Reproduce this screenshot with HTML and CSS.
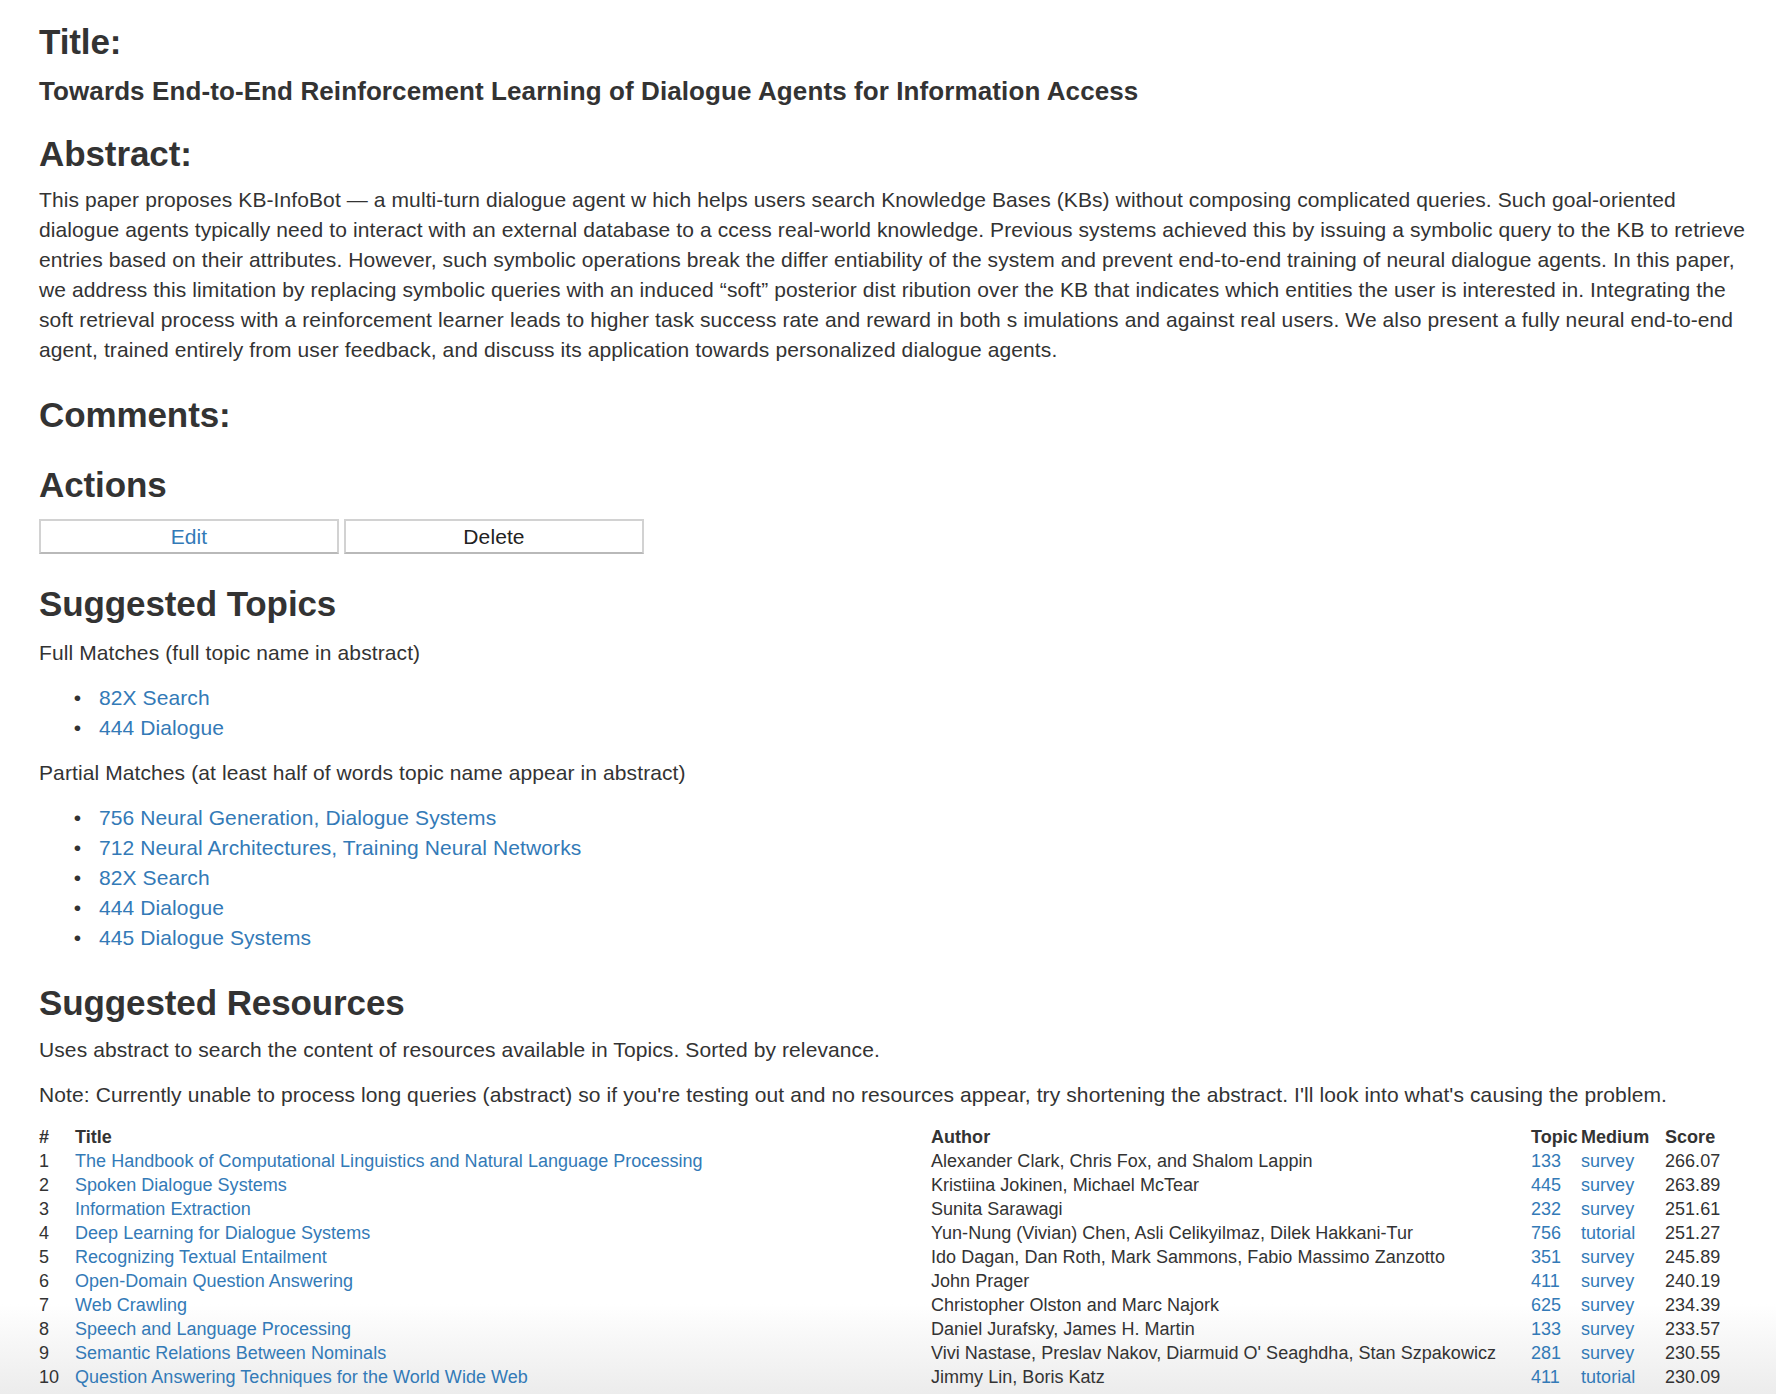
FILE: index.html
```html
<!DOCTYPE html>
<html lang="en">
<head>
<meta charset="utf-8">
<title>Towards End-to-End Reinforcement Learning of Dialogue Agents for Information Access</title>
<link rel="stylesheet" href="styles.css">
</head>
<body>
<main class="page">
  <h3 class="section-title">Title:</h3>
  <h4 class="paper-title">Towards End-to-End Reinforcement Learning of Dialogue Agents for Information Access</h4>

  <h3 class="section-title section-title--abstract">Abstract:</h3>
  <p class="text">This paper proposes KB-InfoBot — a multi-turn dialogue agent w hich helps users search Knowledge Bases (KBs) without composing complicated queries. Such goal-oriented dialogue agents typically need to interact with an external database to a ccess real-world knowledge. Previous systems achieved this by issuing a symbolic query to the KB to retrieve entries based on their attributes. However, such symbolic operations break the differ entiability of the system and prevent end-to-end training of neural dialogue agents. In this paper, we address this limitation by replacing symbolic queries with an induced “soft” posterior dist ribution over the KB that indicates which entities the user is interested in. Integrating the soft retrieval process with a reinforcement learner leads to higher task success rate and reward in both s imulations and against real users. We also present a fully neural end-to-end agent, trained entirely from user feedback, and discuss its application towards personalized dialogue agents.</p>

  <h3 class="section-title">Comments:</h3>

  <h3 class="section-title">Actions</h3>
  <div class="actions">
    <a class="action-btn action-btn--link" href="#">Edit</a>
    <button class="action-btn" type="button">Delete</button>
  </div>

  <h3 class="section-title">Suggested Topics</h3>
  <p class="text">Full Matches (full topic name in abstract)</p>
  <ul class="topic-list">
    <li><a href="#">82X Search</a></li>
    <li><a href="#">444 Dialogue</a></li>
  </ul>
  <p class="text">Partial Matches (at least half of words topic name appear in abstract)</p>
  <ul class="topic-list">
    <li><a href="#">756 Neural Generation, Dialogue Systems</a></li>
    <li><a href="#">712 Neural Architectures, Training Neural Networks</a></li>
    <li><a href="#">82X Search</a></li>
    <li><a href="#">444 Dialogue</a></li>
    <li><a href="#">445 Dialogue Systems</a></li>
  </ul>

  <h3 class="section-title section-title--resources">Suggested Resources</h3>
  <p class="text">Uses abstract to search the content of resources available in Topics. Sorted by relevance.</p>
  <p class="text">Note: Currently unable to process long queries (abstract) so if you're testing out and no resources appear, try shortening the abstract. I'll look into what's causing the problem.</p>

  <table class="resources">
    <colgroup>
      <col class="col-num">
      <col class="col-title">
      <col class="col-author">
      <col class="col-topic">
      <col class="col-medium">
      <col class="col-score">
    </colgroup>
    <thead>
      <tr><th>#</th><th>Title</th><th>Author</th><th>Topic</th><th>Medium</th><th>Score</th></tr>
    </thead>
    <tbody>
      <tr><td>1</td><td><a href="#">The Handbook of Computational Linguistics and Natural Language Processing</a></td><td>Alexander Clark, Chris Fox, and Shalom Lappin</td><td><a href="#">133</a></td><td><a href="#">survey</a></td><td>266.07</td></tr>
      <tr><td>2</td><td><a href="#">Spoken Dialogue Systems</a></td><td>Kristiina Jokinen, Michael McTear</td><td><a href="#">445</a></td><td><a href="#">survey</a></td><td>263.89</td></tr>
      <tr><td>3</td><td><a href="#">Information Extraction</a></td><td>Sunita Sarawagi</td><td><a href="#">232</a></td><td><a href="#">survey</a></td><td>251.61</td></tr>
      <tr><td>4</td><td><a href="#">Deep Learning for Dialogue Systems</a></td><td>Yun-Nung (Vivian) Chen, Asli Celikyilmaz, Dilek Hakkani-Tur</td><td><a href="#">756</a></td><td><a href="#">tutorial</a></td><td>251.27</td></tr>
      <tr><td>5</td><td><a href="#">Recognizing Textual Entailment</a></td><td>Ido Dagan, Dan Roth, Mark Sammons, Fabio Massimo Zanzotto</td><td><a href="#">351</a></td><td><a href="#">survey</a></td><td>245.89</td></tr>
      <tr><td>6</td><td><a href="#">Open-Domain Question Answering</a></td><td>John Prager</td><td><a href="#">411</a></td><td><a href="#">survey</a></td><td>240.19</td></tr>
      <tr><td>7</td><td><a href="#">Web Crawling</a></td><td>Christopher Olston and Marc Najork</td><td><a href="#">625</a></td><td><a href="#">survey</a></td><td>234.39</td></tr>
      <tr><td>8</td><td><a href="#">Speech and Language Processing</a></td><td>Daniel Jurafsky, James H. Martin</td><td><a href="#">133</a></td><td><a href="#">survey</a></td><td>233.57</td></tr>
      <tr><td>9</td><td><a href="#">Semantic Relations Between Nominals</a></td><td>Vivi Nastase, Preslav Nakov, Diarmuid O' Seaghdha, Stan Szpakowicz</td><td><a href="#">281</a></td><td><a href="#">survey</a></td><td>230.55</td></tr>
      <tr><td>10</td><td><a href="#">Question Answering Techniques for the World Wide Web</a></td><td>Jimmy Lin, Boris Katz</td><td><a href="#">411</a></td><td><a href="#">tutorial</a></td><td>230.09</td></tr>
    </tbody>
  </table>
</main>
</body>
</html>
```

FILE: styles.css
```css
html {
  height: 100%;
  background: linear-gradient(to bottom, #ffffff 0, #ffffff calc(100% - 90px), #ececec 100%);
}

body {
  margin: 0;
  font-family: "Liberation Sans", Arial, Helvetica, sans-serif;
  font-size: 21px;
  line-height: 30px;
  letter-spacing: 0.1px;
  color: #333333;
}

a {
  color: #337ab7;
  text-decoration: none;
}

.page {
  padding: 22px 21px 0 39px;
}

.section-title {
  font-size: 35px;
  line-height: 40px;
  font-weight: 700;
  letter-spacing: -0.1px;
  margin: 30px 0 14px;
  color: #333333;
}

.section-title:first-child {
  margin-top: 0;
}

.section-title--abstract {
  margin-top: 28px;
  margin-bottom: 11px;
}

.section-title--resources {
  margin-bottom: 12px;
}

.paper-title {
  font-size: 26px;
  line-height: 30px;
  font-weight: 700;
  letter-spacing: 0.1px;
  margin: 14px 0 0;
  color: #333333;
}

.text {
  margin: 0 0 15px;
}

.actions {
  display: flex;
  gap: 5px;
  margin-top: 13px;
}

.action-btn {
  box-sizing: border-box;
  width: 300px;
  height: 35px;
  display: flex;
  align-items: center;
  justify-content: center;
  background: #ffffff;
  border: 2px solid #d2d2d2;
  border-bottom-color: #b9b9b9;
  font-family: inherit;
  font-size: 21px;
  line-height: 30px;
  letter-spacing: 0.1px;
  color: #222222;
  padding: 0;
}

.action-btn--link {
  color: #337ab7;
}

.topic-list {
  margin: 0 0 15px;
  padding-left: 60px;
}

.topic-list li::marker {
  content: "•\00a0\00a0\00a0";
  color: #333333;
}

.resources {
  width: 1716px;
  table-layout: fixed;
  border-collapse: collapse;
  font-size: 18px;
  line-height: 24px;
  letter-spacing: 0.03px;
}

.resources th,
.resources td {
  padding: 0;
  text-align: left;
  white-space: nowrap;
  vertical-align: top;
}

.resources th {
  font-weight: 700;
}

.col-num { width: 36px; }
.col-title { width: 856px; }
.col-author { width: 600px; }
.col-topic { width: 50px; }
.col-medium { width: 84px; }
.col-score { width: 90px; }
```
